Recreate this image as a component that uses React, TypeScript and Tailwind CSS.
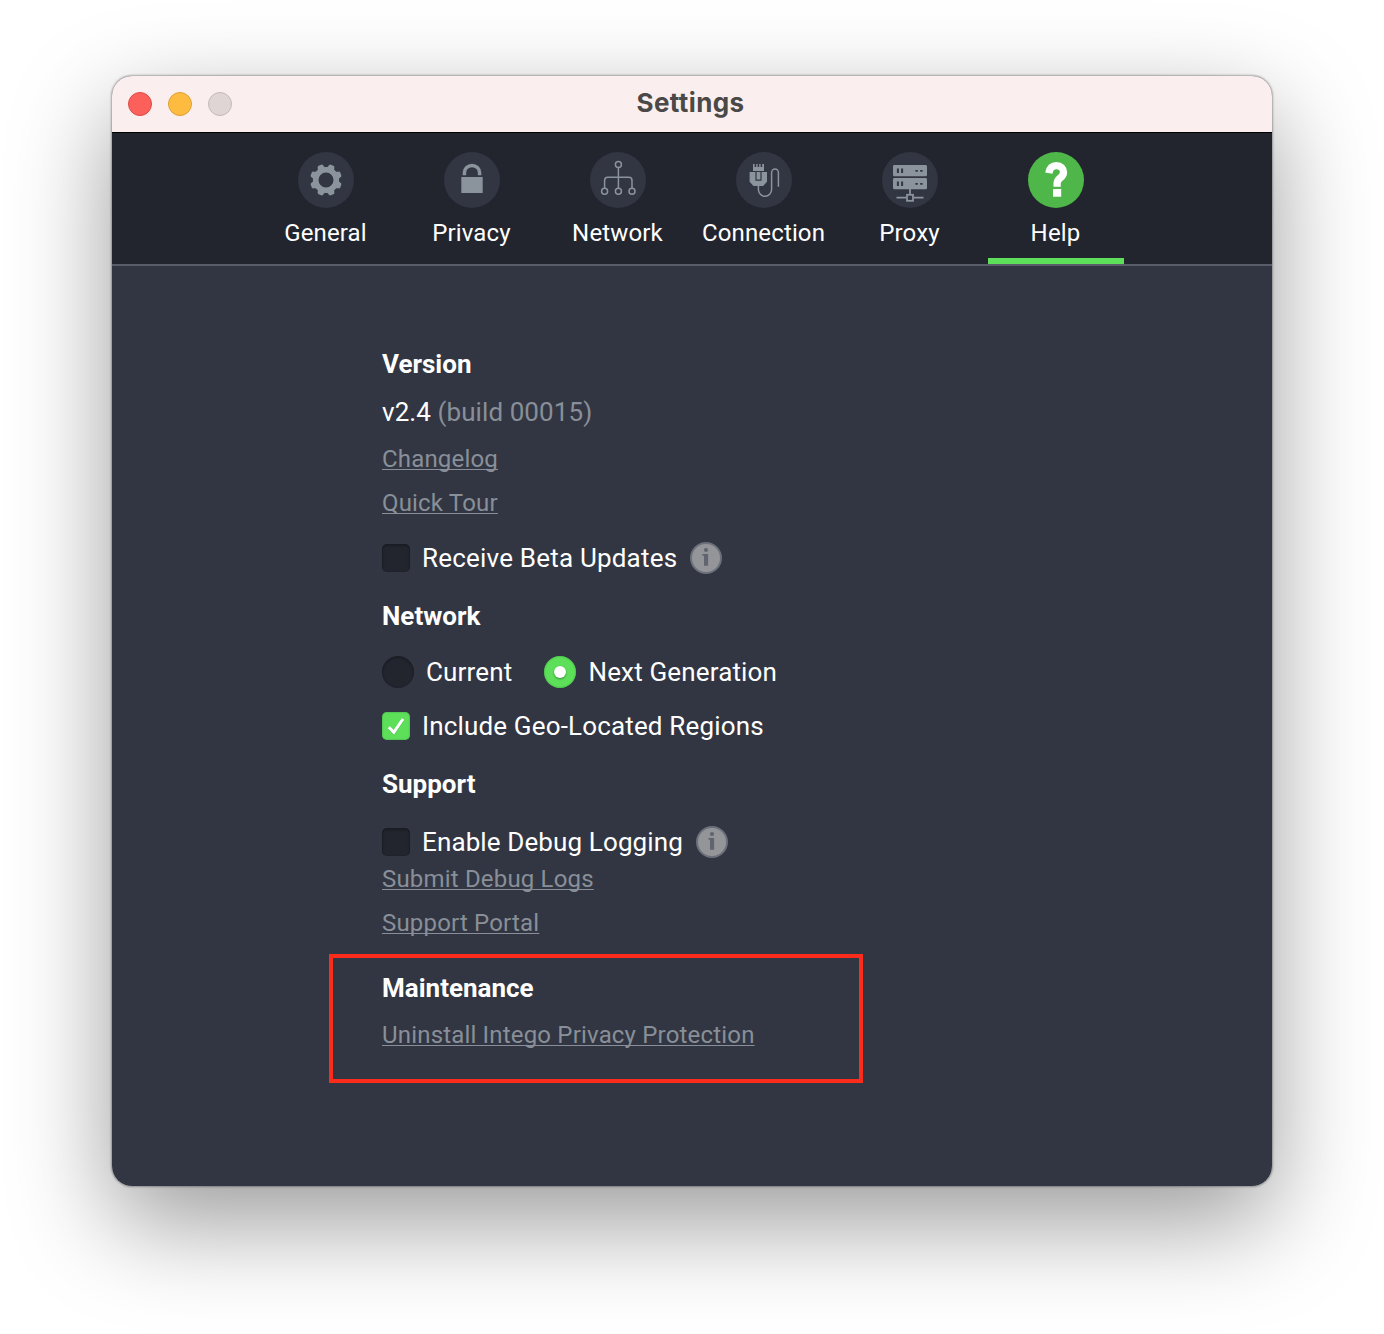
import type { ReactNode } from "react";

function Gear() {
  const teeth = [22.5, 67.5, 112.5, 157.5, 202.5, 247.5, 292.5, 337.5];
  return (
    <svg width="56" height="56" viewBox="0 0 56 56" fill="none">
      <circle cx="28" cy="28" r="10.3" stroke="#8b939c" strokeWidth="5.6" />
      {teeth.map((a) => (
        <path
          key={a}
          d="M23.2 16.8 Q24.7 15.6 25 13.5 Q25.3 12 26.6 12 H29.4 Q30.7 12 31 13.5 Q31.3 15.6 32.8 16.8 Z"
          fill="#8b939c"
          transform={`rotate(${a} 28 28)`}
        />
      ))}
    </svg>
  );
}

function Lock() {
  return (
    <svg width="56" height="56" viewBox="0 0 56 56" fill="none">
      <path d="M20.4 23.3 V20.7 A7.6 7.3 0 0 1 35.6 20.7 V23.3" stroke="#8b939c" strokeWidth="3.5" />
      <rect x="17.3" y="25" width="21.4" height="16" fill="#8b939c" />
    </svg>
  );
}

function NetworkTree() {
  return (
    <svg width="56" height="56" viewBox="0 0 56 56" fill="none" stroke="#8b939c" strokeWidth="1.5">
      <circle cx="28.4" cy="12.6" r="3" />
      <circle cx="14.6" cy="39.3" r="3" />
      <circle cx="28.4" cy="39.3" r="3" />
      <circle cx="42" cy="39.3" r="3" />
      <path d="M28.4 15.6 V36.3 M14.6 36.3 V28.4 Q14.6 25.3 17.8 25.3 H38.8 Q42 25.3 42 28.4 V36.3" />
    </svg>
  );
}

function Plug() {
  return (
    <svg width="56" height="56" viewBox="0 0 56 56" fill="none">
      <path d="M17 12 H18.6 V15 H20.2 V12 H21.6 V15 H23.2 V12 H24.6 V15 H26.2 V12 H28 V19 H17 Z" fill="#8b939c" />
      <path d="M13.6 20 H31 V29.8 L27.2 34 H17.5 L13.6 29.8 Z" fill="#8b939c" />
      <path d="M20 20 V28.2 H25 V20" stroke="#323642" strokeWidth="1.2" />
      <path
        d="M22.4 33.5 V37.5 A6.6 6.8 0 0 0 35.6 37.5 V20.5 A3.4 3.6 0 0 1 42.4 20.5 V34.7"
        stroke="#8b939c"
        strokeWidth="1.5"
      />
    </svg>
  );
}

function Server() {
  return (
    <svg width="56" height="56" viewBox="0 0 56 56" fill="none">
      {[13, 26].map((y) => (
        <g key={y}>
          <rect x="11" y={y} width="34" height="11.3" rx="1.4" fill="#8b939c" />
          <path d={`M15.9 ${y + 3.6} v4.4 M20.1 ${y + 3.6} v4.4`} stroke="#323642" strokeWidth="2" />
          <path
            d={`M34 ${y + 5.8} h1.2 M38.8 ${y + 5.8} h1.2`}
            stroke="#323642"
            strokeWidth="1.7"
            strokeLinecap="round"
          />
        </g>
      ))}
      <path d="M28 37 V42 M14.5 45.7 H24.5 M31.5 45.7 H41.5" stroke="#8b939c" strokeWidth="1.8" />
      <rect x="25" y="42.8" width="6" height="6" stroke="#8b939c" strokeWidth="1.8" />
    </svg>
  );
}

function Question() {
  return (
    <svg width="56" height="56" viewBox="0 0 56 56" fill="none">
      <path
        d="M20.8 21.2 C21.6 16.2 24.3 13.7 28.4 13.7 C32.8 13.7 35.5 16.6 35.5 20.2 C35.5 23 33.8 24.8 32 26.2 C29.9 27.8 29.1 29 29.1 31.6 V34.7"
        stroke="#fff"
        strokeWidth="7.3"
      />
      <rect x="25" y="37" width="8.2" height="7.7" fill="#fff" />
    </svg>
  );
}

function Tab({ label, active, children }: { label: string; active?: boolean; children: ReactNode }) {
  return (
    <div className="relative flex w-[136px] flex-col items-center pt-[19px]">
      <div className={active ? "size-14 rounded-full bg-[#4fb74a]" : "size-14 rounded-full bg-[#323642]"}>
        {children}
      </div>
      <span className="mt-[9px] -ml-px text-[24px] leading-8 tracking-[0.15px] whitespace-nowrap text-white">{label}</span>
      {active && <div className="absolute inset-x-0 bottom-0 h-1.5 bg-[#5ddf5a]" />}
    </div>
  );
}

function Info() {
  return (
    <svg className="ml-[13px]" width="32" height="32" viewBox="0 0 32 32">
      <circle cx="16" cy="16" r="15" fill="#949599" stroke="#6b707b" strokeWidth="2" />
      <circle cx="16" cy="8" r="2.1" fill="#5f646f" />
      <path d="M12.4 12 H18.1 V23.8 H14 V13.8 H12.4 Z" fill="#5f646f" />
    </svg>
  );
}

function Checkbox({ checked }: { checked?: boolean }) {
  if (checked) {
    return (
      <div className="mr-3 size-7 rounded-[5px] bg-[#5ddf5a] shadow-[inset_0_0_1px_1px_rgba(70,180,70,0.5)]">
        <svg width="28" height="28" viewBox="0 0 28 28" fill="none">
          <path
            d="M6.8 15.2 L11.8 20.4 L21 7"
            stroke="#3aa83a"
            strokeOpacity=".5"
            strokeWidth="2.8"
            transform="translate(0 1)"
          />
          <path d="M6.8 15.2 L11.8 20.4 L21 7" stroke="#fff" strokeWidth="3" />
        </svg>
      </div>
    );
  }
  return <div className="mr-3 size-7 rounded-[5px] bg-[#22252e] shadow-[inset_0_1px_2px_1px_rgba(0,0,0,0.25)]" />;
}

function Heading({ className, children }: { className: string; children: ReactNode }) {
  return <h2 className={`flex items-center text-[26px] font-bold text-white ${className}`}>{children}</h2>;
}

function Link({ className, children }: { className: string; children: ReactNode }) {
  return (
    <div className={`flex items-center text-[24px] tracking-[0.18px] text-[#888f98] ${className}`}>
      <a className="underline decoration-1 underline-offset-2 [text-decoration-skip-ink:none]">{children}</a>
    </div>
  );
}

function Row({ className, children }: { className: string; children: ReactNode }) {
  return <div className={`flex items-center text-[26px] tracking-[0.16px] text-white ${className}`}>{children}</div>;
}

export default function App() {
  return (
    <div className="h-[1334px] w-[1384px] overflow-hidden bg-white px-28 pt-[76px] font-['Roboto',sans-serif] leading-none whitespace-nowrap">
      <div className="h-[1110px] w-[1160px] rounded-[20px] shadow-[0_0_2px_1px_rgba(0,0,0,0.3),0_36px_100px_rgba(0,0,0,0.4)]">
        <div className="flex h-full flex-col overflow-hidden rounded-[20px] bg-[#323642]">
          <div className="grid h-14 grid-cols-[1fr_auto_1fr] items-center bg-[#faefee] pl-4">
            <div className="flex gap-4">
              <div className="size-6 rounded-full border border-[#dd4a44] bg-[#fc605b]" />
              <div className="size-6 rounded-full border border-[#dea037] bg-[#fdbc40]" />
              <div className="size-6 rounded-full border border-[#c2b9b8] bg-[#dfd5d4]" />
            </div>
            <h1 className="mr-[19px] pb-0.5 font-['Inter',sans-serif] text-[26px] font-bold tracking-[0.4px] text-[#4b4848]">
              Settings
            </h1>
          </div>
          <div className="flex h-[134px] justify-center gap-2.5 border-t border-b-2 border-t-black border-b-[#585d69] bg-[#22252e] pr-0.5">
            <Tab label="General"><Gear /></Tab>
            <Tab label="Privacy"><Lock /></Tab>
            <Tab label="Network"><NetworkTree /></Tab>
            <Tab label="Connection"><Plug /></Tab>
            <Tab label="Proxy"><Server /></Tab>
            <Tab label="Help" active><Question /></Tab>
          </div>
          <div className="flex flex-col items-start pt-[74px] pl-[270px]">
            <Heading className="h-12">Version</Heading>
            <Row className="h-12">
              <span className="tracking-[0.08px]">v2.4 <span className="text-[#888f98]">(build 00015)</span></span>
            </Row>
            <Link className="h-[46px]">Changelog</Link>
            <Link className="h-[42px]">Quick Tour</Link>
            <Row className="h-[68px]">
              <Checkbox />
              <span className="tracking-[0.2px]">Receive Beta Updates</span>
              <Info />
            </Row>
            <Heading className="h-12">Network</Heading>
            <Row className="h-16">
              <div className="mr-3 size-8 rounded-full bg-[#22252e] shadow-[inset_0_1px_2px_1px_rgba(0,0,0,0.22)]" />
              Current
              <div className="mr-3 ml-8 flex size-8 items-center justify-center rounded-full bg-[#5ddf5a] shadow-[inset_0_0_1px_1px_rgba(70,180,70,0.5)]">
                <div className="size-3 rounded-full bg-white shadow-[0_1px_2px_rgba(0,0,0,0.4)]" />
              </div>
              Next Generation
            </Row>
            <Row className="h-11">
              <Checkbox checked />
              Include Geo-Located Regions
            </Row>
            <Heading className="h-[72px]">Support</Heading>
            <Row className="h-11">
              <Checkbox />
              <span className="tracking-[0.12px]">Enable Debug Logging</span>
              <Info />
            </Row>
            <Link className="h-[30px]">Submit Debug Logs</Link>
            <Link className="h-[58px]">Support Portal</Link>
            <div className="mt-0.5 -ml-[53px] h-[129px] w-[534px] border-4 border-[#fb2c1c] pl-[49px]">
              <Heading className="h-[60px]">Maintenance</Heading>
              <Link className="h-[34px]">Uninstall Intego Privacy Protection</Link>
            </div>
          </div>
        </div>
      </div>
    </div>
  );
}
